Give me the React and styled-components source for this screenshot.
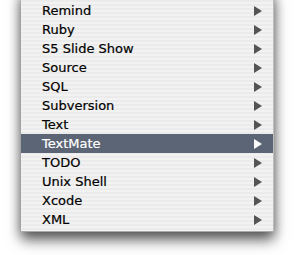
import React from "react";
import styled, { createGlobalStyle } from "styled-components";

const GlobalStyle = createGlobalStyle`
  html, body {
    margin: 0;
    padding: 0;
    background: #ffffff;
    overflow: hidden;
  }
`;

const Page = styled.div`
  width: 296px;
  height: 255px;
  padding: 0 22px 0 21px;
  box-sizing: border-box;
  overflow: hidden;
`;

const Menu = styled.ul`
  list-style: none;
  margin: -10px 0 0;
  padding: 11px 0 2px;
  width: 253px;
  box-sizing: border-box;
  background: repeating-linear-gradient(
    to bottom,
    #f2f2f2 0px,
    #f2f2f2 2px,
    #ebebeb 2px,
    #ebebeb 4px
  );
  border-right: 1px solid #bdbdbd;
  border-bottom: 1px solid #a9a9a9;
  box-shadow: 0 8px 13px rgba(0, 0, 0, 0.6), 0 2px 10px rgba(0, 0, 0, 0.25);
  font-family: "DejaVu Sans", "Liberation Sans", sans-serif;
  font-size: 13px;
`;

const Item = styled.li`
  display: flex;
  align-items: center;
  justify-content: space-between;
  height: 19px;
  padding: 0 11px 0 21px;
  color: ${(p) => (p.$active ? "#ffffff" : "#000000")};
  background: ${(p) => (p.$active ? "#5b6575" : "transparent")};
`;

const Label = styled.span`
  line-height: 19px;
  -webkit-text-stroke: 0.2px currentColor;
`;

const Arrow = styled.svg`
  width: 8px;
  height: 10px;
  fill: ${(p) => (p.$active ? "#ffffff" : "#545454")};
`;

const items = [
  "Remind",
  "Ruby",
  "S5 Slide Show",
  "Source",
  "SQL",
  "Subversion",
  "Text",
  "TextMate",
  "TODO",
  "Unix Shell",
  "Xcode",
  "XML",
];

export default function App() {
  return (
    <Page>
      <GlobalStyle />
      <Menu>
        {items.map((name) => {
          const active = name === "TextMate";
          return (
            <Item key={name} $active={active}>
              <Label>{name}</Label>
              <Arrow $active={active} viewBox="0 0 8 10">
                <polygon points="0,0 8,5 0,10" />
              </Arrow>
            </Item>
          );
        })}
      </Menu>
    </Page>
  );
}
